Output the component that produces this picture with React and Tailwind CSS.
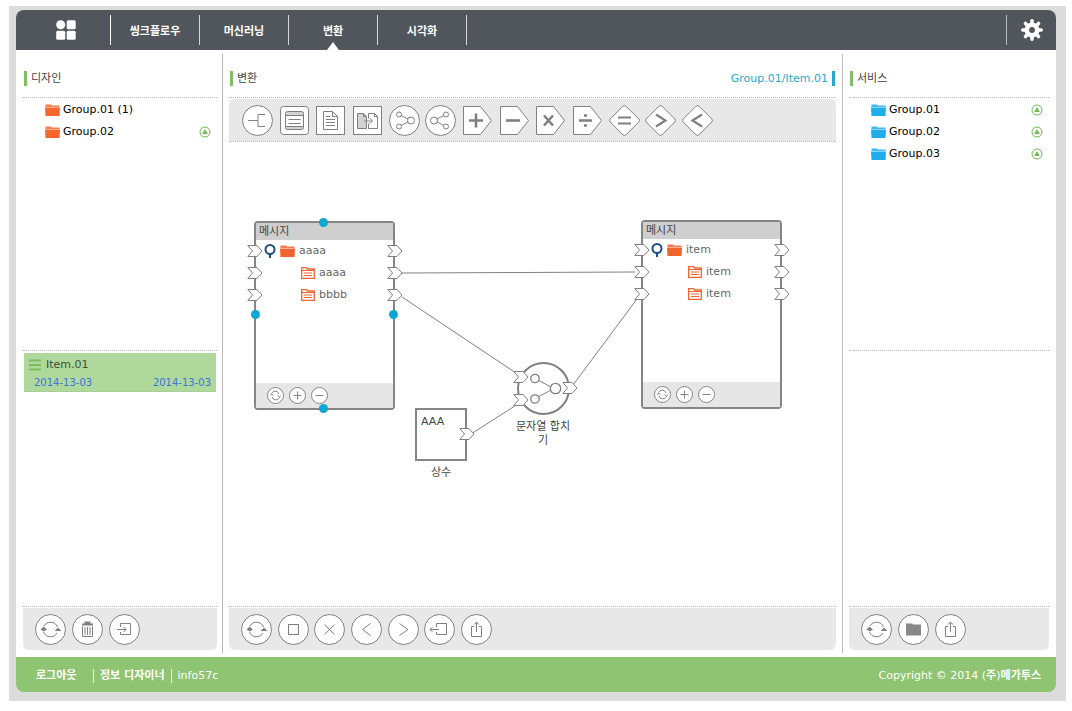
import React from 'react';

const shapes = {
  circle: <circle cx="15.5" cy="15.5" r="15" />,
  rounded: <rect x="1.5" y="1.5" width="28" height="28" rx="3" />,
  square: <rect x="1.5" y="1.5" width="28" height="28" />,
  tag: <path d="M1.5 1.5H18.5L29.5 15.5L18.5 29.5H1.5Z" />,
  diamond: <path d="M14 1.2Q15.5 0 17 1.2L29.8 14Q31 15.5 29.8 17L17 29.8Q15.5 31 14 29.8L1.2 17Q0 15.5 1.2 14Z" />,
};

const glyphs = {
  bracket: <path d="M6 15.5H16M23 9.5H16V21.5H23" />,
  message: (
    <>
      <rect x="6.5" y="6.5" width="18" height="18" rx="2" fill="#d2d2d2" />
      <path d="M7 11H24V21H7Z" fill="#fff" stroke="none" />
      <path d="M9.5 14.5H21.5M9.5 18.5H21.5M6.5 10.5H24.5M6.5 21.5H24.5" />
    </>
  ),
  document: (
    <>
      <path d="M8.5 6.5H17.5L22.5 11.5V24.5H8.5Z" />
      <path d="M17.5 6.5V11.5H22.5M11 11.5H15M11 14.5H20M11 17.5H20M11 20.5H20" />
    </>
  ),
  copy: (
    <>
      <path d="M5.5 8.5H11.5L14.5 11.5V23.5H5.5Z" fill="#d2d2d2" />
      <path d="M11.5 8.5V11.5H14.5M16.5 13.5V8.5H22.5L25.5 11.5V23.5H16.5V18.5M22.5 8.5V11.5H25.5" />
      <path d="M12 16H20M18 13.5L20.5 16L18 18.5" />
    </>
  ),
  merge: (
    <>
      <path d="M12 10.5L19 14M12 20.5L19 17" />
      <circle cx="10" cy="9.5" r="2.5" />
      <circle cx="10" cy="21.5" r="2.5" />
      <circle cx="22" cy="15.5" r="3.5" />
    </>
  ),
  split: (
    <>
      <path d="M19 10.5L12 14M19 20.5L12 17" />
      <circle cx="21" cy="9.5" r="2.5" />
      <circle cx="21" cy="21.5" r="2.5" />
      <circle cx="9" cy="15.5" r="3.5" />
    </>
  ),
  plus: <path d="M7 15.5H21M14 8.5V22.5" strokeWidth="2.6" />,
  minus: <path d="M7 15.5H21" strokeWidth="2.6" />,
  times: <path d="M9 10.5L18 20.5M18 10.5L9 20.5" strokeWidth="2.6" />,
  divide: <path d="M7 15.5H20M12 10.5H15M12 20.5H15" strokeWidth="2.4" />,
  equals: <path d="M9 12.5H22M9 18.5H22" strokeWidth="2" />,
  greater: <path d="M11 9.5L20.5 15.5L11 21.5" strokeWidth="2.2" />,
  less: <path d="M20 9.5L10.5 15.5L20 21.5" strokeWidth="2.2" />,
  refresh: (
    <>
      <path d="M9 12A7.5 7.5 0 0 1 22.5 13M22 19A7.5 7.5 0 0 1 8.5 18" />
      <path d="M5.5 15.5L8.5 12.5L12 15.5L8.8 17.5ZM19.5 17L23 13.5L26.5 17Z" fill="#808080" stroke="none" />
    </>
  ),
  trash: (
    <>
      <path d="M10 10.5H21M12.5 8.5H18.5" strokeWidth="2" />
      <path d="M10.5 12.5V22.5H20.5V12.5M13 13V21M15.5 13V21M18 13V21" />
    </>
  ),
  enter: <path d="M11.5 13V9.5H21.5V20.5H11.5V18M8 15.5H17M14.5 13L17 15.5L14.5 18" />,
  stop: <rect x="10.5" y="10.5" width="10" height="10" />,
  close: <path d="M10.5 10.5L20.5 20.5M20.5 10.5L10.5 20.5" />,
  prev: <path d="M19.5 9.5L11.5 15.5L19.5 21.5" />,
  next: <path d="M11.5 9.5L20 15.5L11.5 21.5" />,
  exit: <path d="M12.5 13V9.5H22.5V20.5H12.5V18M6 15.5H15M8.5 13L6 15.5L8.5 18" />,
  share: <path d="M13 12.5H10.5V22.5H20.5V12.5H18M15.5 18V8M13 10.5L15.5 8L18 10.5" />,
  folder: <path d="M8 9.5H14L15 10.5H23V21.5H8Z" fill="#888" stroke="none" />,
};

const palette = [
  ['circle', 'bracket', '함수'],
  ['rounded', 'message', '메시지'],
  ['square', 'document', '문서'],
  ['square', 'copy', '복사'],
  ['circle', 'merge', '합치기'],
  ['circle', 'split', '나누기'],
  ['tag', 'plus', '더하기'],
  ['tag', 'minus', '빼기'],
  ['tag', 'times', '곱하기'],
  ['tag', 'divide', '나눗셈'],
  ['diamond', 'equals', '같음'],
  ['diamond', 'greater', '초과'],
  ['diamond', 'less', '미만'],
];

const canvasActions = [
  ['refresh', '새로고침'],
  ['stop', '정지'],
  ['close', '닫기'],
  ['prev', '이전'],
  ['next', '다음'],
  ['exit', '나가기'],
  ['share', '내보내기'],
];

const designActions = [
  ['refresh', '새로고침'],
  ['trash', '삭제'],
  ['enter', '가져오기'],
];

const serviceActions = [
  ['refresh', '새로고침'],
  ['folder', '폴더'],
  ['share', '내보내기'],
];

const menus = ['씽크플로우', '머신러닝', '변환', '시각화'];

const ToolButton = ({ shape = 'circle', glyph, label }) => (
  <button type="button" aria-label={label} className="shrink-0">
    <svg width="31" height="31" viewBox="0 0 31 31" fill="none" stroke="#808080" strokeWidth="1" className="block">
      <g fill="#fff">{shapes[shape]}</g>
      {glyphs[glyph]}
    </svg>
  </button>
);

const FolderIcon = ({ color }) => (
  <svg width="15" height="12" viewBox="0 0 15 12" className="block shrink-0">
    <path d="M0.5 0.5H6L7 1.5H14.5V3H0.5Z" fill={color} opacity="0.85" />
    <path d="M0 3.5H15L14.5 12H0.5Z" fill={color} />
  </svg>
);

const FieldIcon = () => (
  <svg width="14" height="12" viewBox="0 0 14 12" fill="none" stroke="#f0642f" className="block shrink-0">
    <path d="M0.7 11.3V0.7H5.5L6.5 2H13.3V11.3Z" strokeWidth="1.3" />
    <path d="M0.7 3.5H13.3M3 6H11M3 8.5H11" strokeWidth="1.2" />
  </svg>
);

const UpIcon = () => (
  <svg width="12" height="12" viewBox="0 0 12 12" className="block">
    <circle cx="6" cy="6" r="5" fill="#fff" stroke="#72b854" />
    <path d="M6 3L8.8 8H3.2Z" fill="#72b854" />
  </svg>
);

const PinIcon = () => (
  <svg width="12" height="14" viewBox="0 0 12 14" fill="none" stroke="#1b4d8c" strokeWidth="2" className="block shrink-0">
    <circle cx="6" cy="5.5" r="4.5" />
    <path d="M6 10V14" />
  </svg>
);

const Port = ({ className }) => (
  <svg width="16" height="12" viewBox="0 0 16 12" className={`absolute ${className}`}>
    <path d="M0.8 0.5H10L15 6L10 11.5H0.8L5.5 6Z" fill="#fff" stroke="#808080" />
  </svg>
);

const PanelTitle = ({ children, right }) => (
  <div className="flex h-[47px] items-center justify-between pt-[10px] text-[#444]">
    <h2 className="flex items-center gap-1 pl-px">
      <span className="h-[15px] w-[3px] bg-[#7fbf61]" />
      {children}
    </h2>
    {right}
  </div>
);

const FolderList = ({ items, color }) => (
  <ul className="pt-px text-black">
    {items.map((item) => (
      <li key={item.name} className="flex h-[22px] items-center justify-between pr-[6px] pl-[22px]">
        <button type="button" className="flex items-center gap-[3px]">
          <FolderIcon color={color} />
          {item.name}
        </button>
        {item.up && (
          <button type="button" aria-label={`${item.name} 올리기`}>
            <UpIcon />
          </button>
        )}
      </li>
    ))}
  </ul>
);

const ActionBar = ({ actions, className }) => (
  <div className="border-t border-dotted border-[#b5b5b5] pt-px pb-[7px]">
    <div className="flex h-[42px] items-center rounded-b-md bg-[#e8e8e8] px-3">
      <div className={`flex justify-between ${className}`}>
        {actions.map(([glyph, label]) => (
          <ToolButton key={glyph} glyph={glyph} label={label} />
        ))}
      </div>
    </div>
  </div>
);

const nodeActions = [
  ['새로고침', 'M4.5 6.5A4 4 0 0 1 12 7M12.5 10.5A4 4 0 0 1 5 10M3 8.5L4.8 7L6.5 8.5M10.5 8.5L12.3 10L14 8.5'],
  ['추가', 'M4.5 8.5H12.5M8.5 4.5V12.5'],
  ['제거', 'M4.5 8.5H12.5'],
];

const handle = 'absolute size-[9px] rounded-full bg-[#0aa8d2]';

const MessageNode = ({ className, root, fields, selected }) => (
  <div className={`absolute flex h-[189px] w-[141px] flex-col rounded border-2 border-[#858585] bg-white text-[#666] ${className}`}>
    <div className="h-[17px] bg-[#cfcfcf] pl-[3px] leading-[18px] text-[#444]">메시지</div>
    <div className="relative flex h-[22px] items-center pl-2">
      <Port className="-left-[9px]" />
      <PinIcon />
      <span className="ml-1 flex items-center gap-1">
        <FolderIcon color="#f0642f" />
        {root}
      </span>
      <Port className="-right-[10px]" />
    </div>
    {fields.map((field, i) => (
      <div key={i} className="relative flex h-[22px] items-center gap-1 pl-[45px]">
        <Port className="-left-[9px]" />
        <FieldIcon />
        {field}
        <Port className="-right-[10px]" />
      </div>
    ))}
    <div className="mt-auto flex h-[25px] items-center gap-[5px] bg-[#e6e6e6] pl-[11px]">
      {nodeActions.map(([label, d]) => (
        <button key={label} type="button" aria-label={label}>
          <svg width="17" height="17" viewBox="0 0 17 17" fill="none" stroke="#858585" className="block">
            <circle cx="8.5" cy="8.5" r="8" fill="#fff" />
            <path d={d} />
          </svg>
        </button>
      ))}
    </div>
    {selected && (
      <>
        <span className={`${handle} -top-[5px] left-[63px]`} />
        <span className={`${handle} -left-[5px] top-[87px]`} />
        <span className={`${handle} -right-[5px] top-[87px]`} />
        <span className={`${handle} -bottom-[5px] left-[63px]`} />
      </>
    )}
  </div>
);

const Canvas = () => (
  <div className="relative min-h-[400px] flex-1 overflow-hidden">
    <svg className="absolute top-0 left-0 h-full w-full" fill="none" stroke="#808080">
      <path d="M173 131L406 130M173 155L290 233M242 292L289 262M344 243L408 157" />
    </svg>

    <MessageNode className="top-[79px] left-[25px]" root="aaaa" fields={['aaaa', 'bbbb']} selected />
    <MessageNode className="top-[78px] left-[412px]" root="item" fields={['item', 'item']} />

    {/* string concatenation */}
    <div className="absolute top-[220px] left-[284px] w-[60px] text-center text-[#444]">
      <div className="relative mx-auto size-[53px]">
        <svg width="53" height="53" viewBox="0 0 53 53" fill="#fff" stroke="#808080" className="block">
          <circle cx="26.5" cy="26.5" r="25.5" strokeWidth="2" />
          <path d="M21 18L34 25M21 35L34 28" />
          <circle cx="18" cy="16.5" r="4.2" strokeWidth="1.3" />
          <circle cx="18" cy="37" r="4.2" strokeWidth="1.3" />
          <circle cx="38.5" cy="26.5" r="5.2" strokeWidth="1.3" />
        </svg>
        <Port className="top-[9px] -left-1" />
        <Port className="top-[32px] -left-1" />
        <Port className="top-[20px] -right-[8px]" />
      </div>
      <p className="pt-[5px] leading-[14px]">
        문자열 합치
        <br />기
      </p>
    </div>

    {/* constant */}
    <div className="absolute top-[266px] left-[186px] w-[52px] text-center text-[#444]">
      <div className="relative h-[53px] border-2 border-[#858585] bg-white pt-1 pl-1 text-left leading-4">
        AAA
        <Port className="top-[18px] -right-[10px]" />
      </div>
      <p className="pt-[5px] leading-[14px]">상수</p>
    </div>
  </div>
);

const App = () => {
  return (
    <div className="flex min-h-screen flex-col bg-white pt-[6px] pr-[6px] pb-[10px] pl-[9px] text-[11px] leading-[14px] font-['DejaVu_Sans','Noto_Sans_CJK_KR',sans-serif]">
      <div className="flex flex-1 flex-col bg-[#dcdcdc] pt-1 pr-[10px] pb-[9px] pl-[7px]">
        <header className="flex h-[40px] items-center rounded-t-lg bg-[#51565d] text-white">
          <button type="button" aria-label="홈" className="flex h-[30px] w-[95px] items-center justify-center border-r border-white pl-[5px]">
            <svg width="20" height="20" viewBox="0 0 20 20" fill="#fff">
              <circle cx="4.7" cy="4.7" r="4.5" />
              <rect x="10.7" y="0.2" width="9" height="9" rx="1.5" />
              <rect x="0.2" y="10.7" width="9" height="9" rx="1.5" />
              <rect x="10.7" y="10.7" width="9" height="9" rx="1.5" />
            </svg>
          </button>
          <nav className="flex">
            {menus.map((menu) => (
              <a key={menu} href="#" className="relative flex h-[30px] w-[89px] items-center justify-center border-r border-[#d5d7d9] pt-1 font-bold">
                {menu}
                {menu === '변환' && (
                  <svg width="12" height="8" viewBox="0 0 12 8" className="absolute -bottom-[5px]">
                    <path d="M6 0L12 8H0Z" fill="#fff" />
                  </svg>
                )}
              </a>
            ))}
          </nav>
          <button type="button" aria-label="설정" className="ml-auto flex h-[30px] w-[50px] items-center justify-center border-l border-[#b5b8bb]">
            <svg width="22" height="22" viewBox="-11 -11 22 22" stroke="#fff" strokeLinecap="round">
              <path d="M0 -9.2V-5M0 9.2V5M-9.2 0H-5M9.2 0H5M-6.5 -6.5L-4 -4M6.5 6.5L4 4M-6.5 6.5L-4 4M6.5 -6.5L4 -4" strokeWidth="3.6" />
              <circle r="5.2" fill="none" strokeWidth="4.6" />
            </svg>
          </button>
        </header>

        <main className="flex flex-1 bg-white">
          <aside className="flex w-[201px] shrink-0 flex-col pl-[7px]">
            <PanelTitle>디자인</PanelTitle>
            <div className="flex-1 border-t border-dotted border-[#b5b5b5]">
              <FolderList color="#f9662b" items={[{ name: 'Group.01 (1)' }, { name: 'Group.02', up: true }]} />
            </div>
            <div className="h-64 border-t border-dotted border-[#b5b5b5] px-px pt-0.5">
              <button type="button" className="block h-[39px] w-full border-b border-dotted border-[#b5b5b5] bg-[#afd89c] pt-1 text-left">
                <span className="flex items-center gap-[5px] pl-[5px] text-[#3d4f39]">
                  <svg width="12" height="12" viewBox="0 0 12 12" stroke="#7dbb60" strokeWidth="2">
                    <path d="M0 1.5H12M0 6H12M0 10.5H12" />
                  </svg>
                  Item.01
                </span>
                <span className="flex justify-between pt-1 pr-[5px] pl-[10px] text-[10px] text-[#3a76d8]">
                  <span>2014-13-03</span>
                  <span>2014-13-03</span>
                </span>
              </button>
            </div>
            <ActionBar actions={designActions} className="w-[105px]" />
          </aside>

          <section className="mt-1 mb-[4px] ml-[5px] flex flex-1 flex-col border-x border-[#b9b9b9] px-[6px]">
            <div className="-mt-1 -mb-1 flex flex-1 flex-col">
              <PanelTitle
                right={
                  <span className="flex items-center gap-1 pr-px text-[#27a9cf]">
                    Group.01/Item.01
                    <span className="h-[15px] w-[3px] bg-[#27a9cf]" />
                  </span>
                }
              >
                변환
              </PanelTitle>
              <div className="border-y border-dotted border-[#b5b5b5] pt-px">
                <div className="flex h-[42px] items-center rounded-t-md bg-[#e8e8e8] px-[13px]">
                  <div className="flex w-[471px] justify-between">
                    {palette.map(([shape, glyph, label]) => (
                      <ToolButton key={glyph} shape={shape} glyph={glyph} label={label} />
                    ))}
                  </div>
                </div>
              </div>
              <Canvas />
              <ActionBar actions={canvasActions} className="w-[251px]" />
            </div>
          </section>

          <aside className="flex w-[213px] shrink-0 flex-col pr-[7px] pl-[6px]">
            <PanelTitle>서비스</PanelTitle>
            <div className="flex-1 border-t border-dotted border-[#b5b5b5]">
              <FolderList
                color="#20aeea"
                items={[
                  { name: 'Group.01', up: true },
                  { name: 'Group.02', up: true },
                  { name: 'Group.03', up: true },
                ]}
              />
            </div>
            <div className="h-64 border-t border-dotted border-[#b5b5b5]" />
            <ActionBar actions={serviceActions} className="w-[105px]" />
          </aside>
        </main>

        <footer className="flex h-[35px] items-center rounded-b-lg bg-[#8fc473] pt-0.5 pr-[15px] pl-5 text-white">
          <a href="#" className="w-[58px] border-r border-white font-bold">로그아웃</a>
          <span className="border-r border-white px-[6px] font-bold">정보 디자이너</span>
          <span className="pl-[6px]">info57c</span>
          <p className="ml-auto">
            Copyright © 2014 (<b>주</b>)<b>메가투스</b>
          </p>
        </footer>
      </div>
    </div>
  );
};

export default App;
